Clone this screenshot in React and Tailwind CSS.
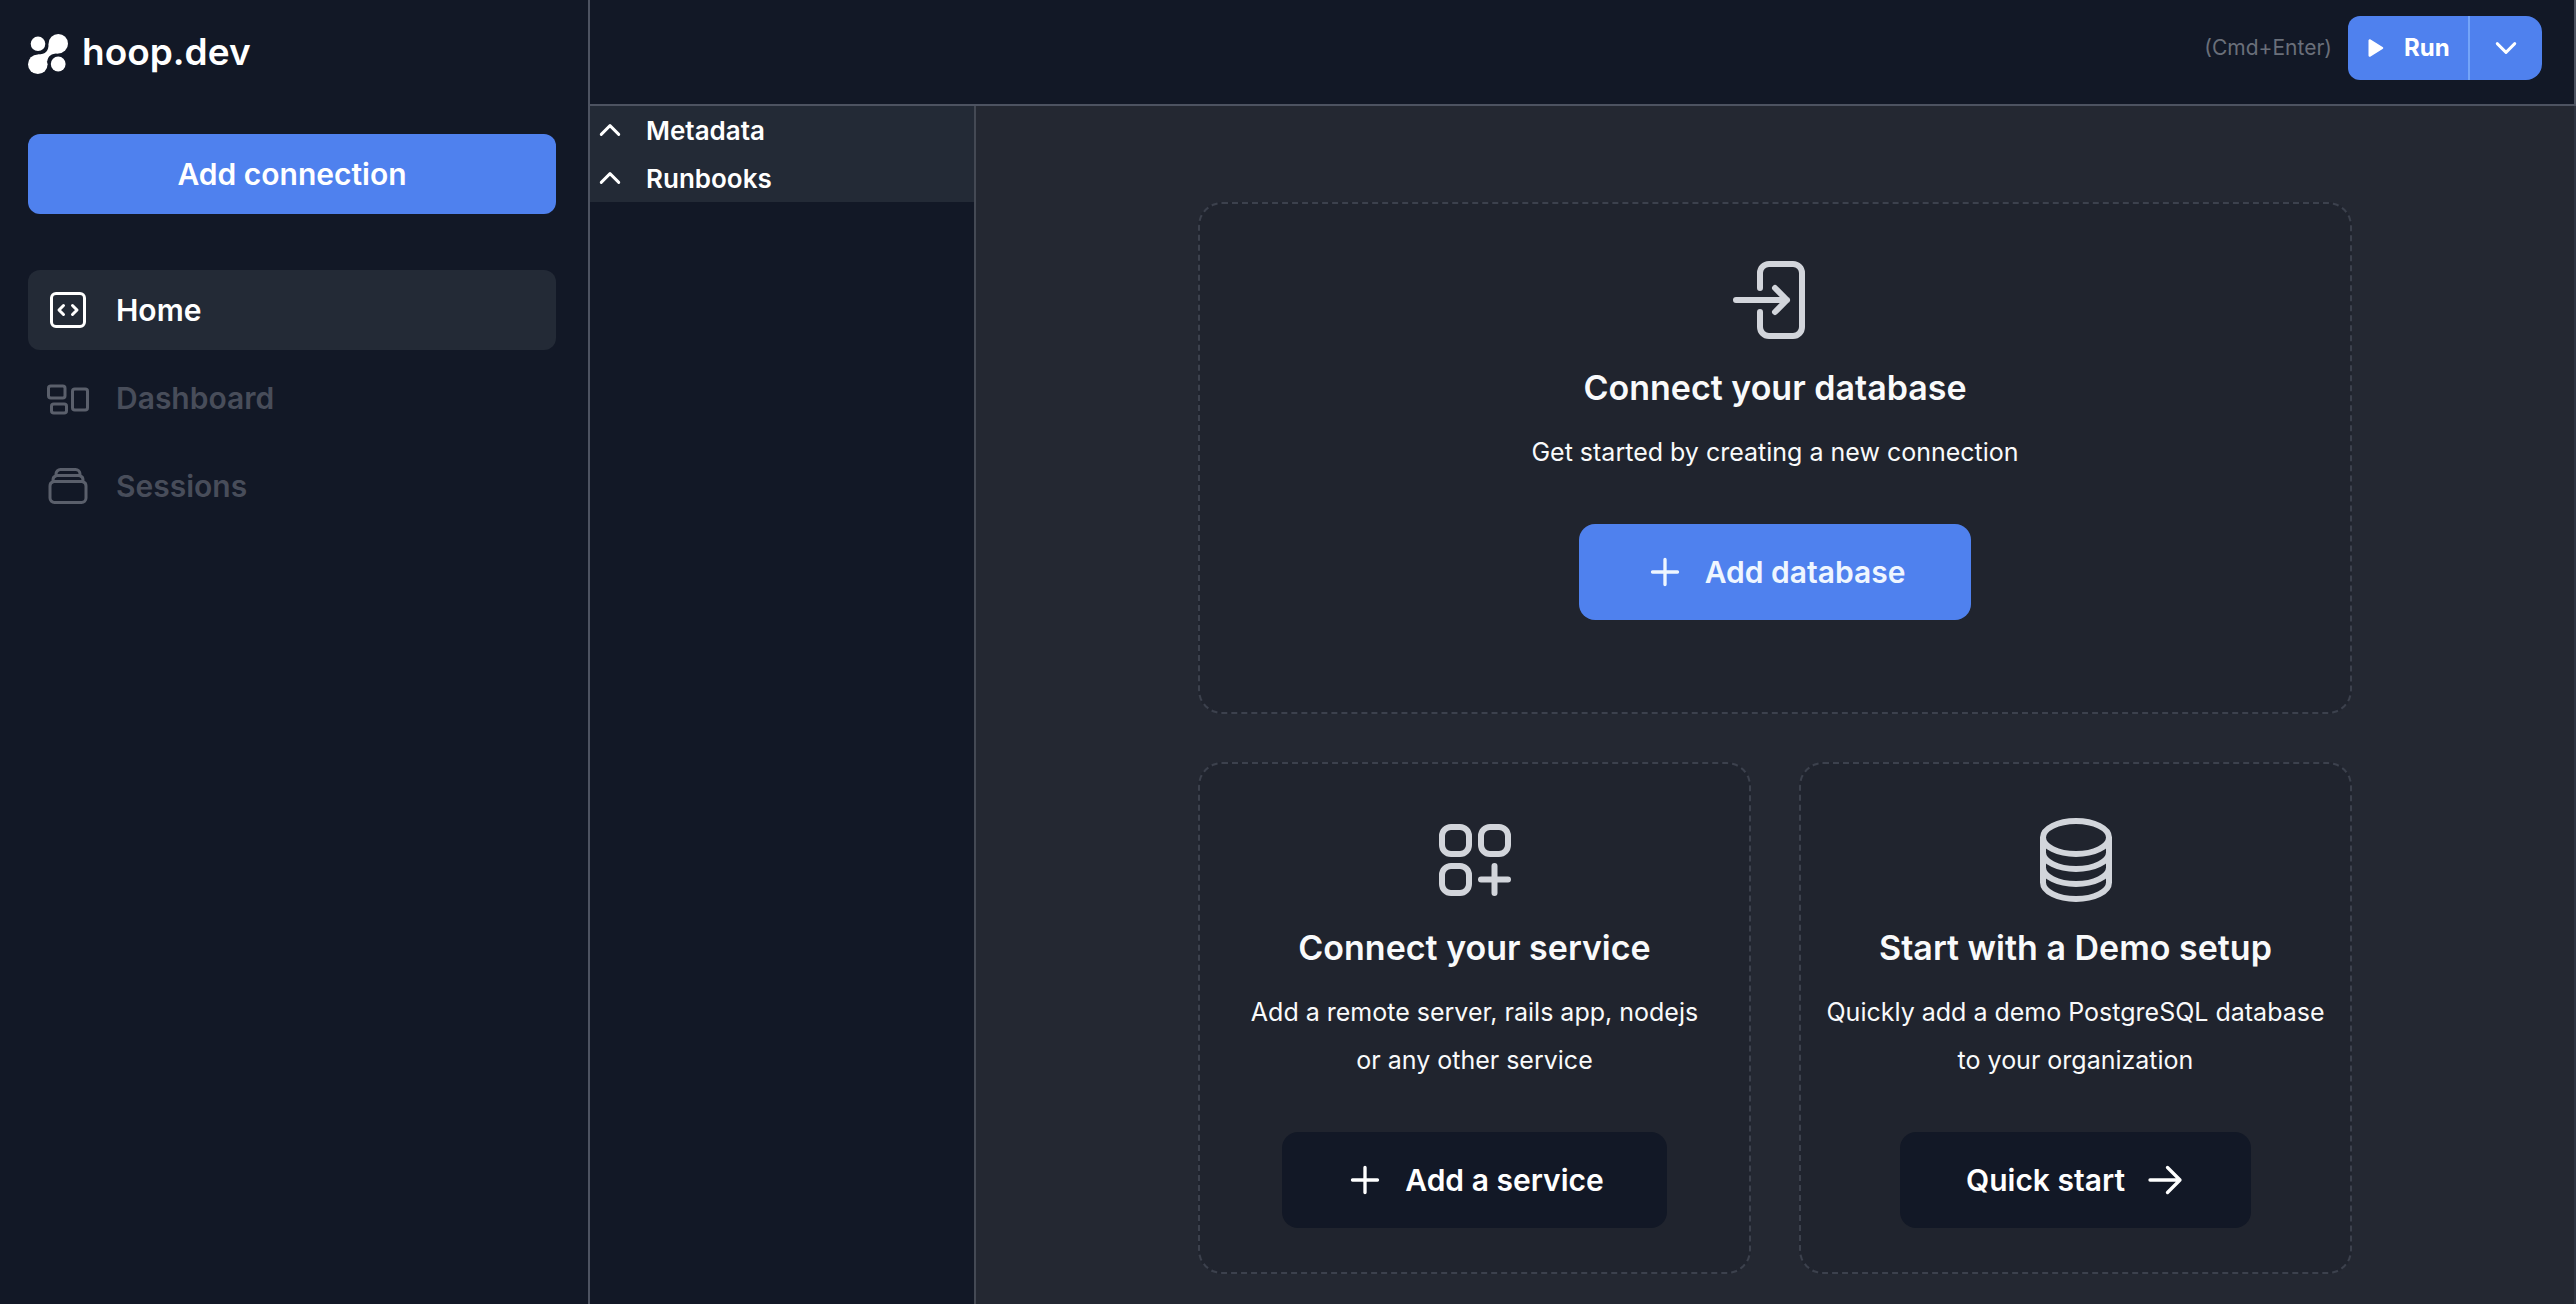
import React from "react";
import {
  HiOutlineCodeBracketSquare,
  HiOutlineRectangleGroup,
  HiOutlineRectangleStack,
  HiOutlineSquaresPlus,
  HiOutlineCircleStack,
} from "react-icons/hi2";

function StrokeIcon({ d, className, strokeWidth = 1.5 }) {
  return (
    <svg
      viewBox="0 0 24 24"
      fill="none"
      stroke="currentColor"
      strokeWidth={strokeWidth}
      strokeLinecap="round"
      strokeLinejoin="round"
      aria-hidden="true"
      className={className}
    >
      <path d={d} />
    </svg>
  );
}

const ICONS = {
  enter:
    "M8.25 9V5.25A2.25 2.25 0 0 1 10.5 3h6a2.25 2.25 0 0 1 2.25 2.25v13.5A2.25 2.25 0 0 1 16.5 21h-6a2.25 2.25 0 0 1-2.25-2.25V15M12 15l3-3m0 0l-3-3m3 3H2.25",
  plus: "M12 4.5v15m7.5-7.5h-15",
  arrowRight: "M13.5 4.5 21 12m0 0-7.5 7.5M21 12H3",
  chevronUp: "M4.5 15.75l7.5-7.5 7.5 7.5",
  chevronDown: "M19.5 8.25l-7.5 7.5-7.5-7.5",
};

function Logo() {
  return (
    <a href="#home" className="flex items-start gap-3.5 text-white">
      <svg viewBox="0 0 40 40" fill="currentColor" className="size-10" aria-hidden="true">
        <circle cx="10" cy="9.8" r="7.3" />
        <circle cx="30.3" cy="9.7" r="9.7" />
        <circle cx="9.8" cy="30.2" r="9.8" />
        <circle cx="30.2" cy="30" r="7.4" />
        <path d="M20.6 9.7C20.6 17 18 20.4 9.8 20.4L15 26L19.2 27.5C20 22 23 19.4 30.3 19.4L26 12z" />
      </svg>
      <span className="text-[37px] leading-9 font-semibold">hoop.dev</span>
    </a>
  );
}

function NavItem({ icon: Icon, label, active }) {
  return (
    <li>
      <a
        href={"#" + label.toLowerCase()}
        aria-current={active ? "page" : undefined}
        className={
          "flex h-20 items-center gap-6 rounded-xl px-4 text-3xl font-semibold " +
          (active ? "bg-[#232a36] text-white" : "text-[#484d5a]")
        }
      >
        <Icon className={active ? "size-12" : "size-12 text-[#5a5f6b]"} aria-hidden="true" />
        {label}
      </a>
    </li>
  );
}

function Sidebar() {
  return (
    <aside className="w-[590px] shrink-0 border-r-2 border-[#4d5361] pt-[34px] pr-8 pl-7">
      <Logo />
      <button className="mt-15 h-20 w-full rounded-xl bg-[#4f81ee] text-3xl font-semibold text-white">
        Add connection
      </button>
      <nav className="mt-14">
        <ul className="flex flex-col gap-2">
          <NavItem icon={HiOutlineCodeBracketSquare} label="Home" active />
          <NavItem icon={HiOutlineRectangleGroup} label="Dashboard" />
          <NavItem icon={HiOutlineRectangleStack} label="Sessions" />
        </ul>
      </nav>
    </aside>
  );
}

function Header() {
  return (
    <header className="flex h-[106px] items-start justify-end gap-4 border-r-2 border-b-2 border-[#4d5361] pt-4 pr-8">
      <span className="text-[21px] leading-16 text-[#6a6f7a]">(Cmd+Enter)</span>
      <div className="flex h-16">
        <button className="flex w-30 items-center gap-5 rounded-l-xl bg-[#4f81ee] pl-5 text-2xl font-bold text-white">
          <svg viewBox="0 0 16 18" fill="currentColor" className="h-[18px] w-4" aria-hidden="true">
            <path d="M.5 1.6C.5.5 1.6-.1 2.6.4l12 7.5c.9.5.9 1.700 0 2.200l-12 7.500C1.600 18.100.5 17.500.5 16.400z" />
          </svg>
          Run
        </button>
        <button
          aria-label="More run options"
          className="flex w-[74px] items-center justify-center rounded-r-2xl border-l-2 border-[#74a4f8] bg-[#4f81ee] text-white"
        >
          <StrokeIcon d={ICONS.chevronDown} strokeWidth={2.5} className="size-7" />
        </button>
      </div>
    </header>
  );
}

function TreeToggle({ label }) {
  return (
    <button className="flex h-12 w-full items-center gap-[22px] bg-[#232a36] pl-1.5 text-[26px] font-semibold text-white">
      <StrokeIcon d={ICONS.chevronUp} strokeWidth={2.5} className="size-7" />
      {label}
    </button>
  );
}

function Card({ icon, title, children, action, wide }) {
  return (
    <section
      className={
        "flex min-h-[512px] flex-col items-center rounded-3xl border-2 border-dashed border-[#3c414d] bg-[#20242e] px-3 pt-12 text-center " +
        (wide ? "col-span-2" : "")
      }
    >
      <div className="text-[#d2d5db]">{icon}</div>
      <h2 className="mt-4 text-[34px] leading-12 font-semibold text-gray-50">{title}</h2>
      <p className="mt-4 text-[25px] leading-12 text-gray-50">{children}</p>
      <div className="mt-12">{action}</div>
    </section>
  );
}

function App() {
  const actionBase =
    "flex h-24 items-center justify-center gap-5 rounded-2xl text-3xl font-semibold ";
  return (
    <div className="flex min-h-screen bg-[#121826] font-['Inter',sans-serif]">
      <Sidebar />
      <div className="flex min-w-0 flex-1 flex-col">
        <Header />
        <div className="flex flex-1">
          <div className="w-[386px] shrink-0 border-r-2 border-[#444954]">
            <TreeToggle label="Metadata" />
            <TreeToggle label="Runbooks" />
          </div>
          <main className="flex flex-1 items-start justify-center border-r-2 border-[#2e3441] bg-[#242832] pt-24">
            <div className="grid w-full max-w-[1154px] grid-cols-2 gap-12">
              <Card
                wide
                icon={<StrokeIcon d={ICONS.enter} className="size-24" />}
                title="Connect your database"
                action={
                  <button className={actionBase + "w-[392px] bg-[#4f81ee] text-blue-50"}>
                    <StrokeIcon d={ICONS.plus} strokeWidth={2} className="size-10" />
                    Add database
                  </button>
                }
              >
                Get started by creating a new connection
              </Card>
              <Card
                icon={<HiOutlineSquaresPlus className="size-24" aria-hidden="true" />}
                title="Connect your service"
                action={
                  <button className={actionBase + "w-[385px] bg-[#121826] text-white"}>
                    <StrokeIcon d={ICONS.plus} strokeWidth={2} className="size-10" />
                    Add a service
                  </button>
                }
              >
                Add a remote server, rails app, nodejs
                <br />
                or any other service
              </Card>
              <Card
                icon={<HiOutlineCircleStack className="size-24" aria-hidden="true" />}
                title="Start with a Demo setup"
                action={
                  <button className={actionBase + "w-[351px] bg-[#121826] text-white"}>
                    Quick start
                    <StrokeIcon d={ICONS.arrowRight} strokeWidth={2} className="size-10" />
                  </button>
                }
              >
                Quickly add a demo PostgreSQL database
                <br />
                to your organization
              </Card>
            </div>
          </main>
        </div>
      </div>
    </div>
  );
}

export default App;
